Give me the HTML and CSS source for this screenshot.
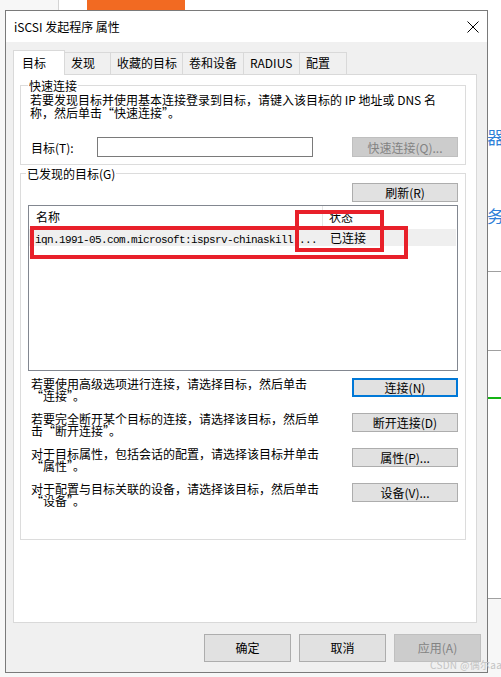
FILE: index.html
```html
<!DOCTYPE html>
<html lang="zh-CN">
<head>
  <meta charset="UTF-8">
  <title>iSCSI 发起程序 属性</title>
  <meta name="viewport" content="width=device-width, initial-scale=1.0">
  <link rel="stylesheet" href="styles.css">
</head>
<body>
  <!-- 背后的桌面 -->
  <div class="desk-top"></div>
  <div class="desk-orange"></div>
  <div class="desk-right"></div>
  <div class="desk-glyph glyph-1">器</div>
  <div class="desk-glyph glyph-2">务</div>
  <div class="desk-rule rule-1"></div>
  <div class="desk-rule rule-2"></div>
  <div class="desk-rule rule-green"></div>
  <div class="desk-rule rule-3"></div>

  <div class="window">
    <div class="titlebar">
      <span class="title">iSCSI 发起程序 属性</span>
      <svg class="close" width="12" height="12" viewBox="0 0 12 12">
        <path d="M0.5 0.5 L11.5 11.5 M11.5 0.5 L0.5 11.5" stroke="#000" stroke-width="1" fill="none"/>
      </svg>
    </div>

    <div class="tabs">
      <div class="tab active" style="width:52px">目标</div>
      <div class="tab" style="width:47px">发现</div>
      <div class="tab" style="width:73px">收藏的目标</div>
      <div class="tab" style="width:62px">卷和设备</div>
      <div class="tab" style="width:57px">RADIUS</div>
      <div class="tab" style="width:48px">配置</div>
    </div>

    <div class="panel">
      <!-- 快速连接 -->
      <fieldset class="group quick">
        <legend>快速连接</legend>
        <p class="hint">若要发现目标并使用基本连接登录到目标，请键入该目标的 IP 地址或 DNS 名<br>称，然后单击“快速连接”。</p>
        <div class="quick-row">
          <label for="target">目标(T):</label>
          <input type="text" id="target" class="field">
          <button class="btn disabled" disabled>快速连接(Q)...</button>
        </div>
      </fieldset>

      <!-- 已发现的目标 -->
      <fieldset class="group found">
        <legend>已发现的目标(G)</legend>
        <div class="refresh-row">
          <button class="btn">刷新(R)</button>
        </div>
        <div class="list">
          <div class="list-head">
            <div class="col-name">名称</div>
            <div class="col-state">状态</div>
          </div>
          <div class="list-row">
            <div class="col-name"><span class="mono">iqn.1991-05.com.microsoft:ispsrv-chinaskill ...</span></div>
            <div class="col-state">已连接</div>
          </div>
          <div class="mark mark-row"></div>
          <div class="mark mark-state"></div>
        </div>

        <div class="actions">
          <div class="action">
            <p>若要使用高级选项进行连接，请选择目标，然后单击<br>“连接”。</p>
            <button class="btn focus">连接(N)</button>
          </div>
          <div class="action">
            <p>若要完全断开某个目标的连接，请选择该目标，然后单<br>击“断开连接”。</p>
            <button class="btn">断开连接(D)</button>
          </div>
          <div class="action">
            <p>对于目标属性，包括会话的配置，请选择该目标并单击<br>“属性”。</p>
            <button class="btn">属性(P)...</button>
          </div>
          <div class="action">
            <p>对于配置与目标关联的设备，请选择该目标，然后单击<br>“设备”。</p>
            <button class="btn">设备(V)...</button>
          </div>
        </div>
      </fieldset>
    </div>

    <div class="footer">
      <button class="btn big">确定</button>
      <button class="btn big">取消</button>
      <button class="btn big disabled" disabled>应用(A)</button>
    </div>
  </div>

  <div class="watermark">CSDN @偶尔aas</div>
</body>
</html>
```

FILE: styles.css
```css
body {
  margin: 0;
  width: 501px;
  height: 677px;
  overflow: hidden;
  position: relative;
  background: #f7f7f7;
  font-family: "Noto Sans CJK SC", "Liberation Sans", sans-serif;
  font-size: 12px;
  color: #000;
}

/* desktop behind the dialog */
.desk-top {
  position: absolute;
  left: 58px;
  top: 0;
  width: 443px;
  height: 10px;
  background: #fff;
  border-left: 1px solid #d4d4d4;
}
.desk-orange {
  position: absolute;
  left: 87px;
  top: 0;
  width: 98px;
  height: 10px;
  background: #f26a22;
}
.desk-right {
  position: absolute;
  left: 488px;
  top: 0;
  width: 13px;
  height: 598px;
  background: #fff;
}
.desk-glyph {
  position: absolute;
  left: 487px;
  font-size: 17px;
  line-height: 17px;
  color: #2f7fd8;
}
.glyph-1 { top: 128px; }
.glyph-2 { top: 207px; }
.desk-rule {
  position: absolute;
  left: 488px;
  width: 13px;
  height: 1px;
  background: #a0a0a0;
}
.rule-1 { top: 271px; }
.rule-2 { top: 350px; }
.rule-3 { top: 598px; }
.rule-green {
  top: 397px;
  height: 2px;
  background: #14b414;
}

/* dialog */
.window {
  position: absolute;
  left: 5px;
  top: 10px;
  width: 481px;
  height: 661px;
  border: 1px solid #7a7a7a;
  background: #f0f0f0;
  display: flex;
  flex-direction: column;
}
.titlebar {
  height: 31px;
  flex: none;
  background: #fff;
  display: flex;
  align-items: center;
  justify-content: space-between;
  padding: 0 8px 0 8px;
}
.title {
  font-size: 12px;
}
.close {
  display: block;
}

.tabs {
  display: flex;
  align-items: flex-end;
  height: 24px;
  margin: 8px 0 0 7px;
  position: relative;
  z-index: 1;
}
.tab {
  box-sizing: border-box;
  height: 22px;
  line-height: 20px;
  padding-left: 6px;
  margin-left: -1px;
  background: #f0f0f0;
  border: 1px solid #d9d9d9;
  border-bottom: none;
  white-space: nowrap;
}
.tab.active {
  height: 25px;
  line-height: 24px;
  margin-left: 0;
  margin-bottom: -1px;
  padding-left: 8px;
  background: #fff;
  position: relative;
  z-index: 2;
}

.panel {
  box-sizing: border-box;
  width: 464px;
  height: 549px;
  margin-left: 7px;
  background: #fff;
  border: 1px solid #d9d9d9;
  padding: 4px 0 0 6px;
}

.group {
  box-sizing: border-box;
  width: 446px;
  min-width: 0;
  margin: 0;
  border: 1px solid #dcdcdc;
}
.group legend {
  padding: 0 1px;
  margin-left: -2px;
  line-height: 13px;
}
.quick {
  padding: 1px 7px 7px 9px;
}
.hint {
  margin: 0;
  line-height: 13px;
  white-space: nowrap;
}
.quick-row {
  display: flex;
  align-items: center;
  margin-top: 18px;
  height: 20px;
}
.quick-row label {
  width: 67px;
  padding-left: 1px;
  box-sizing: border-box;
}
.field {
  box-sizing: border-box;
  width: 216px;
  height: 20px;
  margin: 0;
  border: 1px solid #7a7a7a;
  padding: 0 3px;
  font: inherit;
}
.quick-row .btn {
  margin-left: auto;
  height: 20px;
}

.btn {
  box-sizing: border-box;
  width: 106px;
  height: 19px;
  padding: 0;
  margin: 0;
  background: #e1e1e1;
  border: 1px solid #adadad;
  font: inherit;
  line-height: 17px;
  color: #000;
}
.btn.disabled {
  background: #cccccc;
  border-color: #bfbfbf;
  color: #838383;
}
.btn.focus {
  border: 2px solid #0078d7;
  line-height: 15px;
}

.found {
  margin-top: 2px;
  padding: 1px 7px 21px 7px;
}
.refresh-row {
  display: flex;
  justify-content: flex-end;
  margin-top: 2px;
}
.list {
  position: relative;
  box-sizing: border-box;
  width: 430px;
  height: 166px;
  margin-top: 3px;
  border: 1px solid #828790;
  background: #fff;
}
.list-head,
.list-row {
  display: flex;
  white-space: nowrap;
}
.list-head {
  height: 22px;
  line-height: 22px;
}
.list-head .col-name {
  border-right: 1px solid #e5e5e5;
  padding-left: 7px;
}
.list-row {
  height: 17px;
  line-height: 17px;
  margin-top: 1px;
  margin-right: 1px;
  background: #efefef;
}
.col-name {
  box-sizing: border-box;
  width: 294px;
  padding-left: 6px;
  overflow: hidden;
}
.list-row .col-state {
  padding-left: 7px;
}
.list-head .col-state {
  padding-left: 6px;
}
.mono {
  font-family: "Liberation Mono", "DejaVu Sans Mono", monospace;
  font-size: 11px;
  letter-spacing: -0.6px;
}
.mark {
  position: absolute;
  box-sizing: border-box;
  border: 4px solid #e8202a;
}
.mark-row {
  left: 1px;
  top: 20px;
  width: 378px;
  height: 33px;
}
.mark-state {
  left: 266px;
  top: 4px;
  width: 89px;
  height: 42px;
}

.actions {
  margin-top: 7px;
}
.action {
  display: flex;
  justify-content: space-between;
  align-items: flex-start;
  height: 35px;
}
.action p {
  margin: 0;
  padding-left: 3px;
  line-height: 12px;
  white-space: nowrap;
}
.action .btn {
  height: 19px;
}

.footer {
  display: flex;
  justify-content: flex-end;
  gap: 8px;
  margin-top: 11px;
  padding-right: 6px;
}
.btn.big {
  width: 87px;
  height: 28px;
  line-height: 26px;
  font-size: 12px;
}

.watermark {
  position: absolute;
  left: 430px;
  top: 659px;
  font-size: 10px;
  line-height: 12px;
  color: #c4c4c4;
  letter-spacing: 0.3px;
  white-space: nowrap;
}
```
